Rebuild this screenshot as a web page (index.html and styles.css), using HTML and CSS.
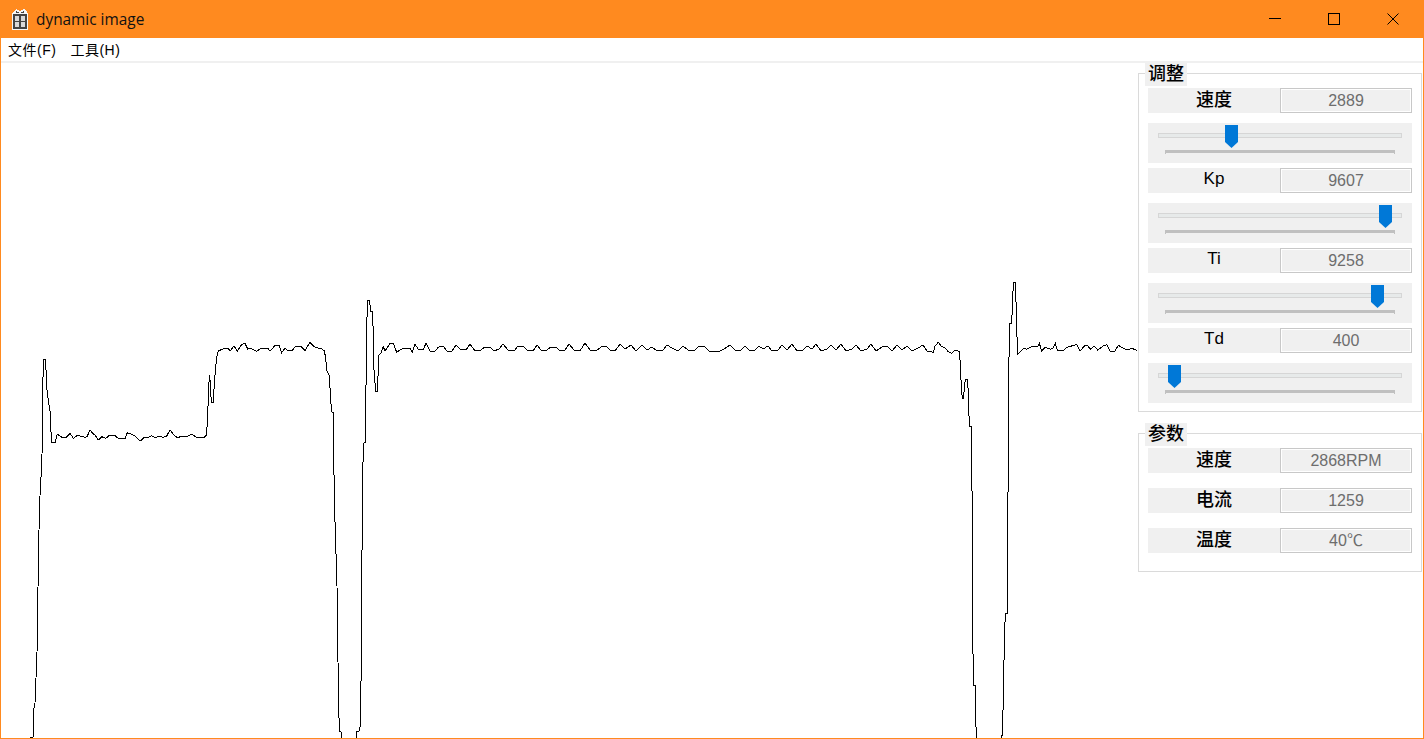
FILE: index.html
```html
<!DOCTYPE html>
<html lang="zh">
<head>
<meta charset="utf-8">
<title>dynamic image</title>
<link rel="stylesheet" href="styles.css">
</head>
<body>
<div class="window">
  <header class="titlebar">
    <svg class="app-icon" viewBox="0 0 18 21" width="18" height="21" shape-rendering="crispEdges">
      <path d="M2 3 L5 0 L9 2 L13 0 L16 3 L16 5 L2 5 Z" fill="#f6f6f6"/>
      <path d="M5 2 L9 4 L13 2 L13 4 L5 4 Z" fill="#444"/>
      <rect x="1" y="4" width="16" height="17" fill="#f6f6f6"/>
      <rect x="2" y="5" width="14" height="15" fill="#444"/>
      <rect x="4" y="7" width="4" height="5" fill="#d8d8d8"/>
      <rect x="10" y="7" width="4" height="5" fill="#d8d8d8"/>
      <rect x="4" y="13" width="4" height="5" fill="#d8d8d8"/>
      <rect x="10" y="13" width="4" height="5" fill="#d8d8d8"/>
    </svg>
    <span class="title">dynamic image</span>
    <div class="controls">
      <button class="ctl"><svg viewBox="0 0 12 12" width="12" height="12" shape-rendering="crispEdges"><path d="M0 5.5H12" stroke="#000" fill="none"/></svg></button>
      <button class="ctl"><svg viewBox="0 0 12 12" width="12" height="12" shape-rendering="crispEdges"><rect x="0.5" y="0.5" width="11" height="11" stroke="#000" fill="none"/></svg></button>
      <button class="ctl"><svg viewBox="0 0 12 12" width="12" height="12"><path d="M0.5 0.5L11.5 11.5M11.5 0.5L0.5 11.5" stroke="#000" fill="none"/></svg></button>
    </div>
  </header>
  <nav class="menubar">
    <span class="menu-item">文件(F)</span>
    <span class="menu-item">工具(H)</span>
  </nav>
  <main class="main">
    <div class="chart">
      <svg class="plot" viewBox="1 63 1137 675" shape-rendering="crispEdges">
        <polyline fill="none" stroke="#000" stroke-width="1" points="30,737.5 33,737.5 33.5,711 35,703 37,653 38.5,555 39.5,505 41.5,468 42.5,440 42.5,396 43.5,359 45.5,359 46,370 47,390 48.3,400 50,411 51,432 52,442.7 55,443 57.3,434 60.7,436.7 64.3,438 66,437.7 70,433.3 73.3,438.3 77.3,435.3 85,437.3 87,436.7 90,430 92.7,433.3 95,435 98.3,440 101.7,436.7 106,438.3 108.7,435.7 115,435.7 118.3,438.3 125,439 127.3,432.7 131.7,434.3 135,436 140,441.3 144,437.7 148,437.3 151.7,435.7 155,437.7 159.3,436.3 163.3,437.3 166.7,436 170,430 174,435 177.3,437.7 181.7,436.3 188.3,436 191.7,434.3 196,437 204,437.3 206.7,435 207.3,420 208.3,400 209.3,375 210.3,382 211.3,402.7 213.3,402.7 214.3,383 215.7,368 216.7,356.7 218.3,351 223.3,348.7 228.3,348.7 230,351 234,346 237.3,351.3 241.7,344.3 245,343.3 247.7,349 250.7,348.3 256.7,351.3 261.7,348 267.7,348 270,351.3 275,345.3 279,345.3 281.7,352.7 285,348.3 287.3,350 292.7,350 295,347 301,346.7 305,350.7 310,342.3 314,346.7 321.7,349 324.3,350.7 325.7,358.3 326.7,370 329.3,376 330.7,400 331.7,412 333.3,412.7 333.5,443 334.5,506 335.5,537 337,585.7 338.3,684 339.3,731.7 341.3,732 341.7,745 356,745 356,732 359,731 360,727 360.7,720 361.3,646.7 362.3,510.7 363.3,443.3 365.3,442.7 365.7,406.7 366.7,336.7 367.3,300 369.3,300 371,311.7 372.7,311.7 374,370 375.7,391.7 377.3,391.7 379,355 381,353.3 383.3,346.7 385,351 390,343.3 393.3,343.3 396.7,352.3 401.7,349 410,348.3 412.3,352.3 415,344.3 418.3,349.3 423.3,349.3 426,343.3 430,351 435,351 438.3,347.3 443,346 447,351 452,351 456,345 460,349 466,350 470,344 475,351 481,350 485,347 490,347 494,351 499,349 503,344 508,350 514,351 518,346 523,346 527,350 533,351 537,345 541,350 547,350 551,347 556,347 560,351 565,350 569,344 574,350 580,351 585,343 590,350 596,351 601,347 606,346 610,350 615,351 620,344 625,349 631,345 636,351 642,345 647,350 652,347 657,351 663,350 667,345 672,348 678,351 683,346 688,350 694,351 699,346 704,346 709,351 718,352 724,349 730,345 735,350 741,350 745,346 750,351 755,350 759,346 763,349 768,346 772,351 778,350 782,345 787,350 792,344 797,351 803,350 807,346 812,349 816,344 821,351 827,349 831,345 836,350 841,344 846,351 852,349 856,345 861,351 867,349 871,344 876,351 882,347 887,346 892,351 897,345 902,350 907,346 912,351 918,348 923,345 927,351 933.3,352.3 935,346 938.3,342.3 941.7,346.7 945,347.7 948.3,351.7 951.7,353.3 955,350 959.3,351.3 960.3,363.3 961.3,386.7 962.3,398.3 963.3,398.3 965.3,379.3 967.3,379.3 968.3,391.7 969.3,426 971.3,426.7 971.7,490 972.3,491.7 972.7,620 973.3,685 975.3,685.7 975.7,706.7 976.3,745 1001.3,745 1002.3,731.7 1003.3,701.7 1004.3,643.3 1005.3,613.3 1007.3,613.3 1007.7,540.7 1008.5,420 1008.7,396 1009.3,323.3 1011.3,323.3 1012.3,311.7 1013.3,282.3 1015.3,282.3 1016,301.7 1017,336.7 1017.7,354 1020.7,351.7 1023.3,348.3 1026.7,349.3 1031.7,346.7 1038.3,346 1039.3,343.3 1041.7,351 1045,347.3 1050.7,349.3 1053,348 1055.3,343.3 1057.3,350 1062.7,351 1066.7,347.3 1074,345.3 1076.7,344.7 1080,351 1085,345.3 1087,345 1090.7,349.3 1094,346 1097.7,350 1103.3,346 1106.7,344.7 1110,351 1115,351 1118.3,345.3 1121.7,347.3 1126.7,350 1131.7,348.3 1136.7,350.3"/>
      </svg>
    </div>
    <aside class="panel">
      <section class="group group-adjust">
        <h2 class="legend">调整</h2>
        <div class="row"><span class="label cjk">速度</span><span class="value">2889</span></div>
        <div class="slider"><div class="track"></div><div class="thumb" style="left:77px"></div><div class="ticks"></div></div>
        <div class="row"><span class="label">Kp</span><span class="value">9607</span></div>
        <div class="slider"><div class="track"></div><div class="thumb" style="left:231px"></div><div class="ticks"></div></div>
        <div class="row"><span class="label">Ti</span><span class="value">9258</span></div>
        <div class="slider"><div class="track"></div><div class="thumb" style="left:223px"></div><div class="ticks"></div></div>
        <div class="row"><span class="label">Td</span><span class="value">400</span></div>
        <div class="slider"><div class="track"></div><div class="thumb" style="left:20px"></div><div class="ticks"></div></div>
      </section>
      <section class="group group-params">
        <h2 class="legend">参数</h2>
        <div class="row"><span class="label cjk">速度</span><span class="value">2868RPM</span></div>
        <div class="row"><span class="label cjk">电流</span><span class="value">1259</span></div>
        <div class="row"><span class="label cjk">温度</span><span class="value">40<span class="unit">℃</span></span></div>
      </section>
    </aside>
  </main>
</div>
</body>
</html>
```

FILE: styles.css
```css
* { box-sizing: border-box; }
html, body { margin: 0; height: 100%; overflow: hidden; background: #fff; }
body { font-family: "Liberation Sans", "Noto Sans CJK SC", sans-serif; color: #000; }

.window {
  height: 739px;
  display: flex;
  flex-direction: column;
  border: 1px solid #ff8a1f;
  border-top: 0;
}

.titlebar {
  height: 38px;
  flex: none;
  display: flex;
  align-items: center;
  background: #ff8a1f;
  padding-left: 10px;
}
.app-icon { flex: none; }
.title {
  margin-left: 7px;
  font-family: "Open Sans", sans-serif;
  font-size: 15.4px;
  color: #111;
}
.controls { margin-left: auto; display: flex; height: 100%; padding-right: 1px; }
.ctl {
  width: 59px;
  height: 100%;
  padding: 0;
  border: 0;
  background: none;
  display: flex;
  align-items: center;
  justify-content: center;
}

.menubar {
  height: 25px;
  flex: none;
  display: flex;
  border-bottom: 2px solid #f0f0f0;
  font-size: 14px;
  line-height: 24px;
  letter-spacing: 0.5px;
}
.menu-item { padding: 0 7px; }

.main { flex: 1; min-height: 0; display: flex; }
.chart { flex: 1; min-width: 0; }
.plot { display: block; width: 100%; height: 100%; }

.panel { width: 285px; flex: none; padding-right: 1px; padding-top: 10px; }

.group {
  position: relative;
  border: 1px solid #dadada;
  padding: 14px 9px 8px;
  display: flex;
  flex-direction: column;
}
.group-adjust { height: 339px; }
.group-params { height: 139px; margin-top: 21px; gap: 15px; padding-bottom: 18px; }

.legend {
  position: absolute;
  left: 6px;
  top: -11px;
  margin: 0;
  width: 42px;
  height: 23px;
  background: #f0f0f0;
  font-size: 18px;
  font-weight: 500;
  line-height: 19px;
  text-align: center;
  font-family: "Noto Sans CJK SC", sans-serif;
}

.row { display: flex; height: 25px; flex: none; background: #f0f0f0; }
.label {
  width: 132px;
  text-align: center;
  font-size: 17px;
  line-height: 21px;
}
.label.cjk {
  font-family: "Noto Sans CJK SC", sans-serif;
  font-size: 18px;
  font-weight: 500;
  line-height: 20px;
}
.value {
  width: 132px;
  border: 1px solid #c8c8c8;
  box-shadow: inset 0 0 0 1px #fff;
  text-align: center;
  font-size: 16px;
  line-height: 24px;
  color: #6d6d6d;
}
.unit { font-family: "Noto Sans CJK SC", sans-serif; line-height: 0; }

.slider {
  position: relative;
  height: 40px;
  flex: none;
  margin: 10px 0 5px;
  background: #f0f0f0;
}
.group-adjust .slider:last-child { margin-bottom: 0; }
.track {
  position: absolute;
  left: 10px;
  right: 10px;
  top: 10px;
  height: 5px;
  background: #e7eaea;
  border: 1px solid #d6d6d6;
}
.thumb {
  position: absolute;
  top: 2px;
  width: 13px;
  height: 23px;
  background: #0078d7;
  clip-path: polygon(0 0, 100% 0, 100% 74%, 50% 100%, 0 74%);
}
.ticks {
  position: absolute;
  left: 17px;
  right: 17px;
  top: 27px;
  height: 3px;
  background: #c0c0c0;
}
.ticks::before,
.ticks::after {
  content: "";
  position: absolute;
  top: 0;
  width: 1px;
  height: 4px;
  background: #c0c0c0;
}
.ticks::before { left: 0; }
.ticks::after { right: 0; }
```
